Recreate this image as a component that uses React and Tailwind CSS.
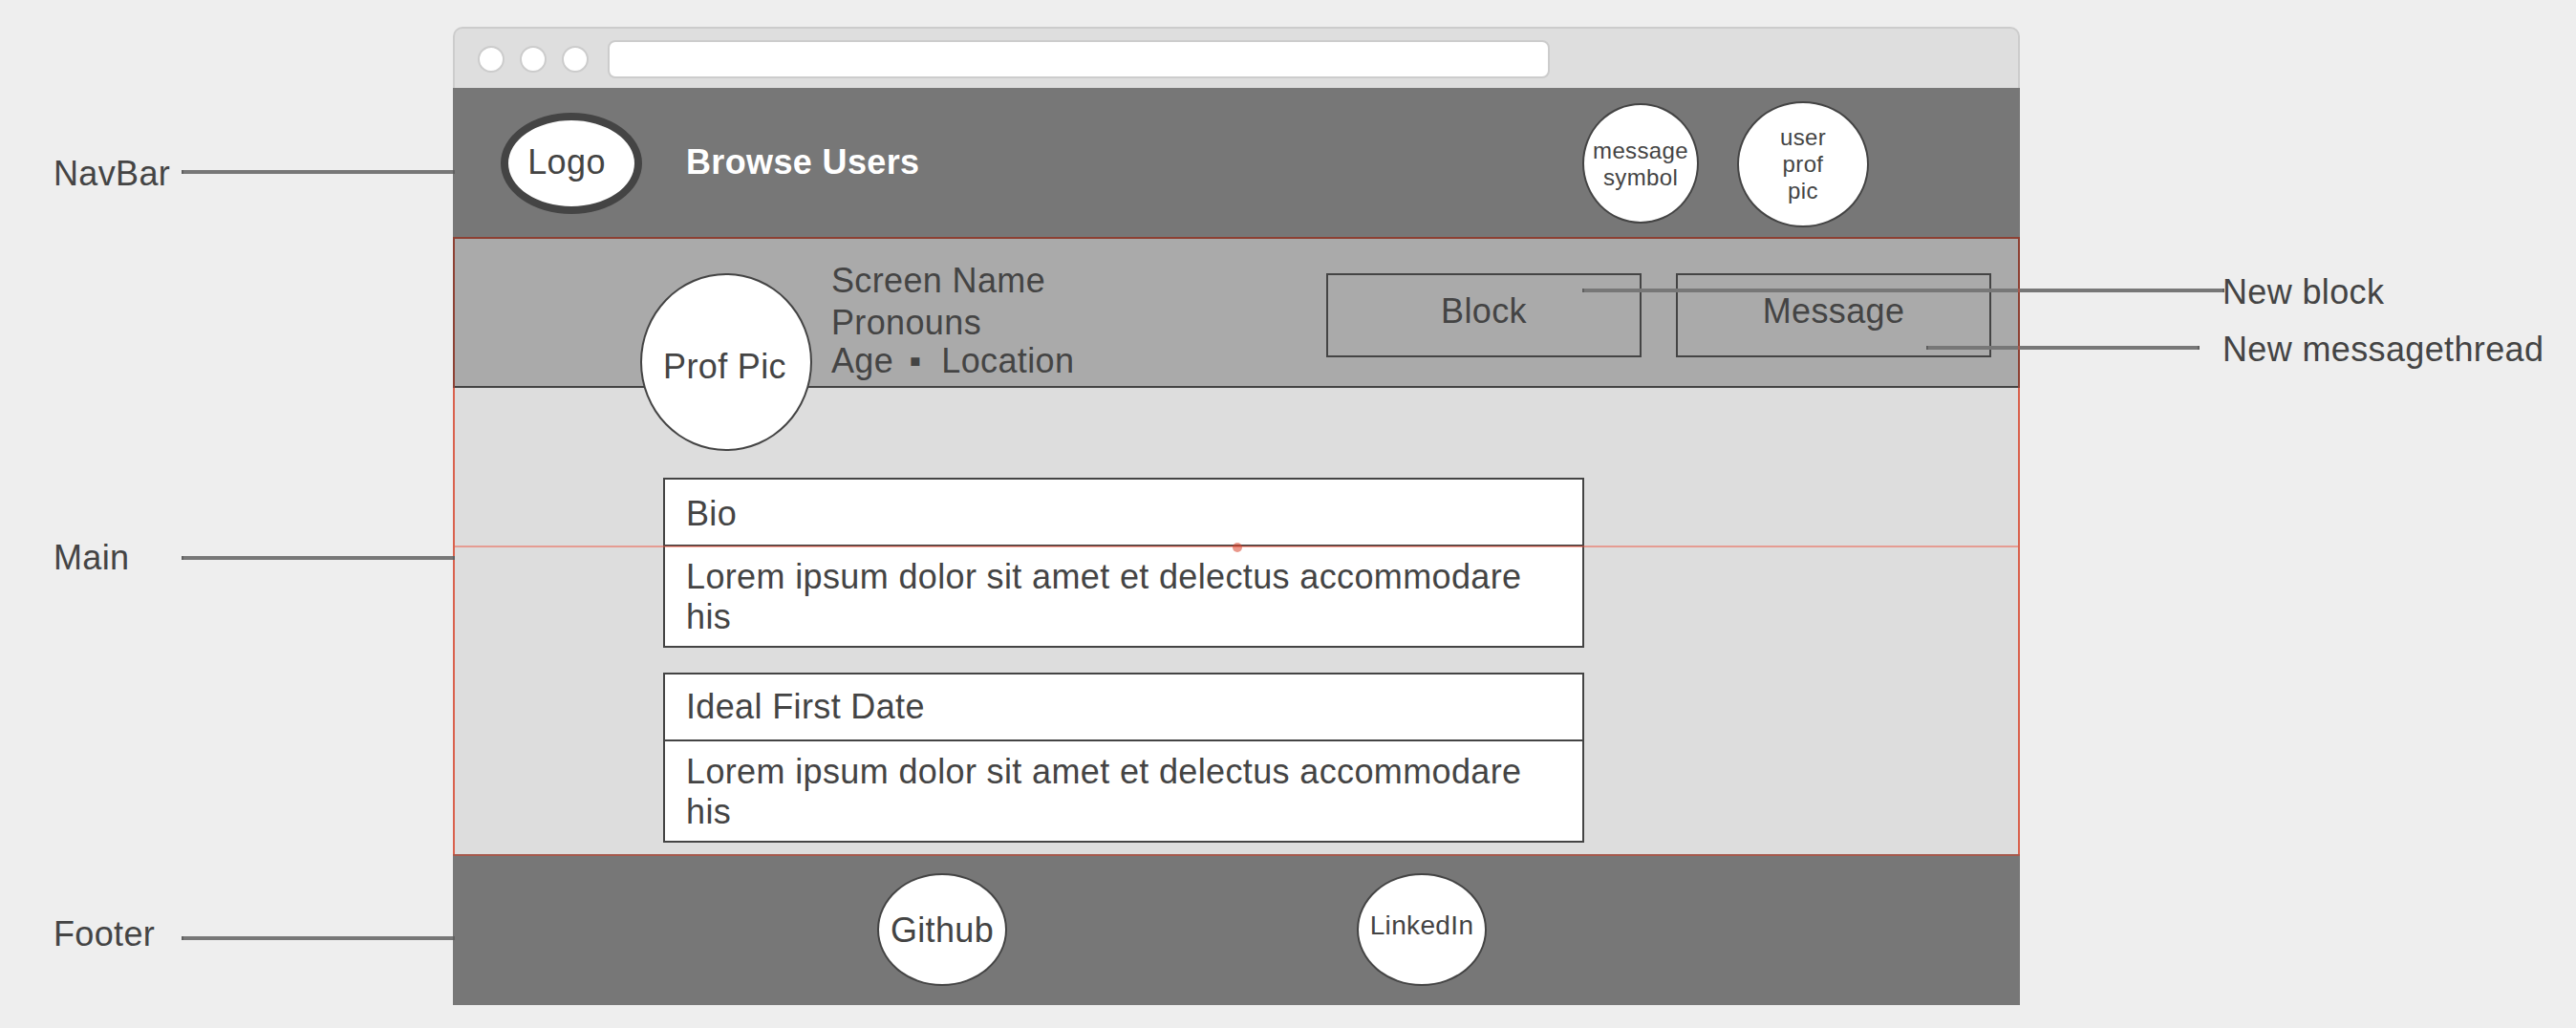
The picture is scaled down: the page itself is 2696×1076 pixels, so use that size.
const LINE = "bg-[#777777] border-x-2 border-[#606060] h-1 shrink-0";

function Ellipse({ className, children }) {
  return (
    <div className={`flex shrink-0 items-center justify-center rounded-[50%] border-[#444444] bg-white text-center ${className}`}>
      {children}
    </div>
  );
}

function SideLabel({ className, lineClass, children }) {
  return (
    <div className={`flex h-[42px] ${className}`}>
      <span className="w-[134px] shrink-0">{children}</span>
      <span className={`z-10 w-[286px] ${LINE} ${lineClass}`} />
    </div>
  );
}

function Card({ title, titleClass, bodyClass, className }) {
  return (
    <section className={`h-[178px] w-[964px] border-2 border-[#444444] bg-white ${className}`}>
      <h2 className={`h-[70px] border-b-2 border-[#444444] pl-[22px] ${titleClass}`}>{title}</h2>
      <p className={`pl-[22px] pr-10 ${bodyClass}`}>Lorem ipsum dolor sit amet et delectus accommodare his</p>
    </section>
  );
}

function Browser() {
  return (
    <div className="relative mt-7 h-[1024px] w-[1640px] shrink-0">
      <div className="flex h-16 items-center gap-4 rounded-t-[10px] border-2 border-b-0 border-[#cccccc] bg-[#dedede] pl-6 pt-0.5">
        <span className="size-7 rounded-full border-2 border-[#cccccc] bg-white" />
        <span className="size-7 rounded-full border-2 border-[#cccccc] bg-white" />
        <span className="size-7 rounded-full border-2 border-[#cccccc] bg-white" />
        <span className="ml-1 h-10 w-[986px] rounded-lg border-2 border-[#cccccc] bg-white" />
      </div>

      <nav className="flex h-[156px] items-start bg-[#777777] pl-[50px]">
        <Ellipse className="mt-[26px] h-[106px] w-[148px] border-8 pb-[2px] pr-[10px]">Logo</Ellipse>
        <span className="ml-[46px] mt-[57px] w-[938px] font-bold text-white">Browse Users</span>
        <Ellipse className="mt-4 h-[126px] w-[122px] border-2 pt-[2px] text-2xl leading-7">
          message<br />symbol
        </Ellipse>
        <Ellipse className="ml-10 mt-[14px] h-[132px] w-[138px] border-2 text-2xl leading-7">
          user<br />prof<br />pic
        </Ellipse>
      </nav>

      <header className="flex h-[158px] items-start border-2 border-[#444444] bg-[#aaaaaa] pl-[194px] pt-9">
        <Ellipse className="h-[186px] w-[180px] border-2 pr-[3px] pt-[9px]">Prof Pic</Ellipse>
        <div className="-mt-[13px] ml-5 w-[518px] whitespace-pre">
          <p className="h-11">Screen Name</p>
          <p className="h-10">Pronouns</p>
          <p>Age <span className="ml-[6px]">▪</span>  Location</p>
        </div>
        <div className="flex gap-9 text-center">
          <div className="h-[88px] w-[330px] border-2 border-[#444444] pt-[17px]">Block</div>
          <div className="h-[88px] w-[330px] border-2 border-[#444444] pt-[17px]">Message</div>
        </div>
      </header>

      <main className="h-[488px] bg-[#dddddd] pl-[220px] pt-[94px]">
        <Card title="Bio" titleClass="pt-[15px]" bodyClass="pt-[11px]" />
        <Card title="Ideal First Date" titleClass="pt-[13px]" bodyClass="pt-[11px]" className="mt-[26px]" />
      </main>

      <footer className="flex h-[158px] items-start bg-[#777777] pl-[444px] pt-5">
        <Ellipse className="h-[118px] w-[136px] border-2 pt-[2px]">Github</Ellipse>
        <Ellipse className="ml-[366px] h-[118px] w-[136px] border-2 pb-[8px] text-[28px]">LinkedIn</Ellipse>
      </footer>
    </div>
  );
}

export default function App() {
  return (
    <div className="relative flex h-[1076px] w-[2696px] overflow-hidden bg-[#eeeeee] font-['Liberation_Sans',Arial,sans-serif] text-4xl leading-[42px] tracking-[0.36px] text-[#444444]">
      <aside className="w-[474px] shrink-0 pl-[56px]">
        <SideLabel className="mt-[161px]" lineClass="mt-[17px]">NavBar</SideLabel>
        <SideLabel className="mt-[360px]" lineClass="mt-[19px]">Main</SideLabel>
        <SideLabel className="mt-[352px]" lineClass="mt-[23px]">Footer</SideLabel>
      </aside>

      <Browser />

      <aside className="pl-[212px] pt-[285px]">
        <p className="h-[60px] whitespace-nowrap">New block</p>
        <p className="whitespace-nowrap">New messagethread</p>
      </aside>

      {/* Callout lines from the buttons to their labels */}
      <span className={`absolute left-[1656px] top-[302px] w-[672px] ${LINE}`} />
      <span className={`absolute left-[2016px] top-[362px] w-[286px] ${LINE}`} />

      {/* Selection outline with its guide line and centre handle */}
      <div className="absolute left-[474px] top-[248px] h-[648px] w-[1640px] border-2 border-[#d63b22]/50" />
      <div className="absolute left-[474px] top-[406px] h-[488px] w-[1640px] border-x-2 border-[#d9614d]" />
      <span className="absolute left-[476px] top-[571px] h-[2px] w-[1636px] bg-[#f04e37]/45" />
      <span className="absolute left-[1290px] top-[568px] size-[10px] rounded-full bg-[#d9442c]/55" />
    </div>
  );
}
